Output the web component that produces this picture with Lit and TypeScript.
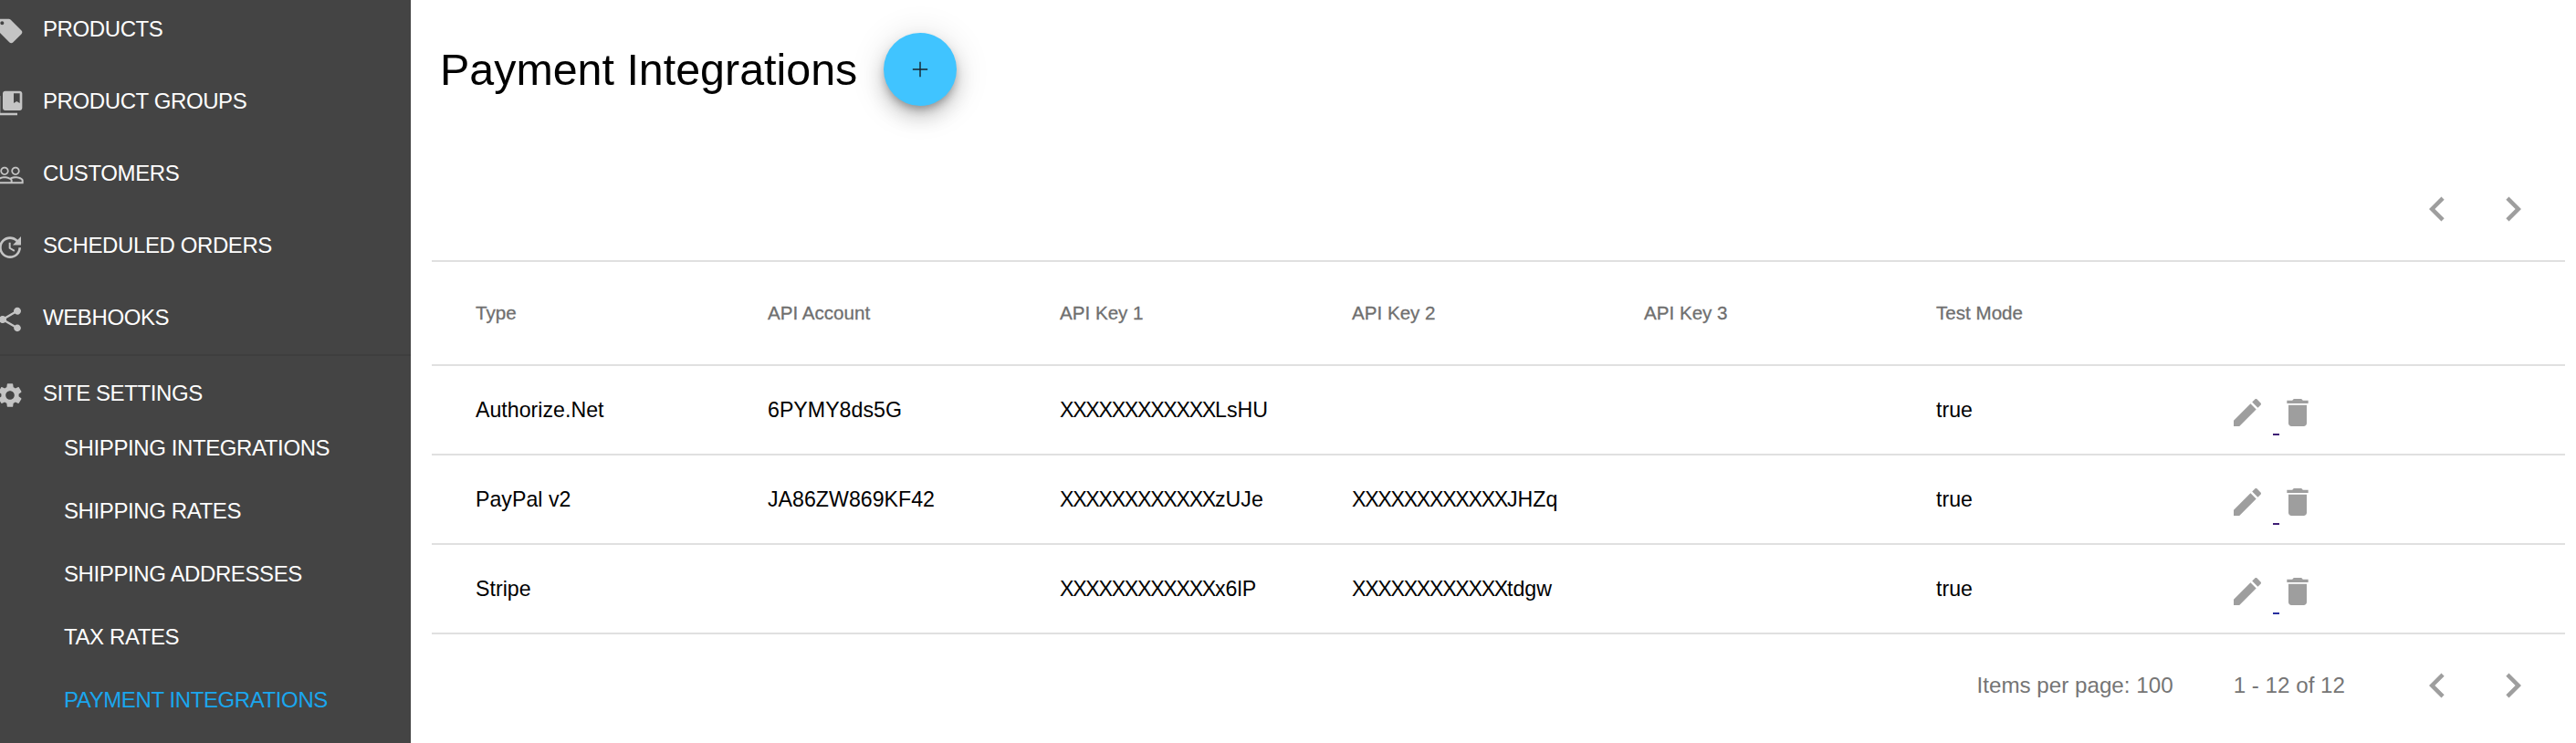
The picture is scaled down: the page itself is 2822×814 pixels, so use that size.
import { LitElement, html, css, svg } from "lit";
import { customElement } from "lit/decorators.js";

const P: Record<string, string> = {
  tag: "M21.41 11.58l-9-9C12.05 2.22 11.55 2 11 2H4c-1.1 0-2 .9-2 2v7c0 .55.22 1.05.59 1.42l9 9c.36.36.86.58 1.41.58.55 0 1.05-.22 1.41-.59l7-7c.37-.36.59-.86.59-1.41 0-.55-.23-1.06-.59-1.42zM5.5 7C4.67 7 4 6.33 4 5.5S4.67 4 5.5 4 7 4.67 7 5.5 6.33 7 5.5 7z",
  groups: "M4 6H2v14c0 1.1.9 2 2 2h14v-2H4V6zm16-4H8c-1.1 0-2 .9-2 2v12c0 1.1.9 2 2 2h12c1.1 0 2-.9 2-2V4c0-1.1-.9-2-2-2zm0 10l-2.5-1.5L15 12V4h5v8z",
  people: "M16.5 13c-1.2 0-3.07.34-4.5 1-1.43-.67-3.3-1-4.5-1C5.33 13 1 14.08 1 16.25V19h22v-2.75c0-2.17-4.33-3.25-6.5-3.25zm-4 4.5h-10v-1.25c0-.54 2.56-1.75 5-1.75s5 1.21 5 1.75v1.25zm9 0H14v-1.25c0-.46-.2-.86-.52-1.22.88-.3 1.96-.53 3.02-.53 2.44 0 5 1.21 5 1.75v1.25zM7.5 12c1.93 0 3.5-1.57 3.5-3.5S9.43 5 7.5 5 4 6.57 4 8.5 5.57 12 7.5 12zm0-5.7c1.21 0 2.2.99 2.2 2.2s-.99 2.2-2.2 2.2-2.2-.99-2.2-2.2.99-2.2 2.2-2.2zm9 5.7c1.93 0 3.5-1.57 3.5-3.5S18.43 5 16.5 5 13 6.57 13 8.5s1.57 3.5 3.5 3.5zm0-5.7c1.21 0 2.2.99 2.2 2.2s-.99 2.2-2.2 2.2-2.2-.99-2.2-2.2.99-2.2 2.2-2.2z",
  update: "M21 10.12h-6.78l2.74-2.82c-2.73-2.7-7.15-2.8-9.88-.1-2.73 2.71-2.73 7.08 0 9.79s7.15 2.71 9.88 0C18.32 15.65 19 14.08 19 12.1h2c0 1.98-.88 4.55-2.64 6.29-3.51 3.48-9.21 3.48-12.72 0-3.5-3.47-3.53-9.11-.02-12.58s9.14-3.47 12.65 0L21 3v7.12zM12.5 8v4.25l3.5 2.08-.72 1.21L11 13V8h1.5z",
  share: "M18 16.08c-.76 0-1.44.3-1.96.77L8.91 12.7c.05-.23.09-.46.09-.7s-.04-.47-.09-.7l7.05-4.11c.54.5 1.25.81 2.04.81 1.66 0 3-1.34 3-3s-1.34-3-3-3-3 1.34-3 3c0 .24.04.47.09.7L8.04 9.81C7.5 9.31 6.79 9 6 9c-1.66 0-3 1.34-3 3s1.34 3 3 3c.79 0 1.5-.31 2.04-.81l7.12 4.16c-.05.21-.08.43-.08.65 0 1.61 1.31 2.92 2.92 2.92 1.61 0 2.92-1.31 2.92-2.92s-1.31-2.92-2.92-2.92z",
  gear: "M19.14 12.94c.04-.3.06-.61.06-.94 0-.32-.02-.64-.07-.94l2.03-1.58c.18-.14.23-.41.12-.61l-1.92-3.32c-.12-.22-.37-.29-.59-.22l-2.39.96c-.5-.38-1.03-.7-1.62-.94l-.36-2.54c-.04-.24-.24-.41-.48-.41h-3.84c-.24 0-.43.17-.47.41l-.36 2.54c-.59.24-1.13.57-1.62.94l-2.39-.96c-.22-.08-.47 0-.59.22L2.74 8.87c-.12.21-.08.47.12.61l2.03 1.58c-.05.3-.09.63-.09.94s.02.64.07.94l-2.03 1.58c-.18.14-.23.41-.12.61l1.92 3.32c.12.22.37.29.59.22l2.39-.96c.5.38 1.03.7 1.62.94l.36 2.54c.05.24.24.41.48.41h3.84c.24 0 .44-.17.47-.41l.36-2.54c.59-.24 1.13-.56 1.62-.94l2.39.96c.22.08.47 0 .59-.22l1.92-3.32c.12-.22.07-.47-.12-.61l-2.01-1.58zM12 15.6c-1.98 0-3.6-1.62-3.6-3.6s1.62-3.6 3.6-3.6 3.6 1.62 3.6 3.6-1.62 3.6-3.6 3.6z",
  edit: "M3 17.25V21h3.75L17.81 9.94l-3.75-3.75L3 17.25zM20.71 7.04c.39-.39.39-1.02 0-1.41l-2.34-2.34c-.39-.39-1.02-.39-1.41 0l-1.83 1.83 3.75 3.75 1.83-1.83z",
  del: "M6 19c0 1.1.9 2 2 2h8c1.1 0 2-.9 2-2V7H6v12zM19 4h-3.5l-1-1h-5l-1 1H5v2h14V4z",
  prev: "M15.41 7.41L14 6l-6 6 6 6 1.41-1.41L10.83 12z",
  next: "M10 6L8.59 7.41 13.17 12l-4.58 4.59L10 18l6-6z",
  plus: "M19 12.6h-6.4V19h-1.2v-6.4H5v-1.2h6.4V5h1.2v6.4H19z",
};

const icon = (name: string, cls: string) =>
  html`<svg class=${cls} viewBox="0 0 24 24" aria-hidden="true">${svg`<path d=${P[name]}></path>`}</svg>`;

const topNav = [
  ["tag", "PRODUCTS"],
  ["groups", "PRODUCT GROUPS"],
  ["people", "CUSTOMERS"],
  ["update", "SCHEDULED ORDERS"],
  ["share", "WEBHOOKS"],
];
const subNav = ["SHIPPING INTEGRATIONS", "SHIPPING RATES", "SHIPPING ADDRESSES", "TAX RATES", "PAYMENT INTEGRATIONS"];
const heads = ["Type", "API Account", "API Key 1", "API Key 2", "API Key 3", "Test Mode", ""];
const rows = [
  { cells: ["Authorize.Net", "6PYMY8ds5G", "XXXXXXXXXXXXLsHU", "", "", "true"], dash: "#3f1f75" },
  { cells: ["PayPal v2", "JA86ZW869KF42", "XXXXXXXXXXXXzUJe", "XXXXXXXXXXXXJHZq", "", "true"], dash: "#3f1f75" },
  { cells: ["Stripe", "", "XXXXXXXXXXXXx6lP", "XXXXXXXXXXXXtdgw", "", "true"], dash: "#28309f" },
];

// The masked prefix of a key is set tighter than the rest of the cell.
const cell = (text: string) => {
  const mask = /^X{12}/.test(text);
  return mask
    ? html`<div><span class="mask">${text.slice(0, 12)}</span>${text.slice(12)}</div>`
    : html`<div>${text}</div>`;
};

@customElement("app-root")
export class AppRoot extends LitElement {
  static styles = css`
    :host {
      display: flex;
      width: 2822px;
      height: 814px;
      overflow: hidden;
      font-family: "Liberation Sans", Arial, sans-serif;
      background: #fff;
      color: #000;
    }
    .side {
      flex: 0 0 450px;
      height: 814px;
      background: #444444;
      overflow: hidden;
      color: #fff;
      font-size: 24px;
      letter-spacing: -0.4px;
    }
    .top {
      margin-top: -8px;
      border-bottom: 2px solid #3e3e3e;
      padding-bottom: 1px;
    }
    .item {
      height: 79px;
      display: flex;
      align-items: center;
      gap: 20px;
      margin-left: -5px;
    }
    .settings {
      height: 82px;
    }
    .nico {
      width: 32px;
      height: 32px;
      flex: none;
      fill: #c4c4c4;
      position: relative;
      top: 2px;
    }
    .sub {
      height: 69px;
      display: flex;
      align-items: center;
      padding-left: 70px;
    }
    .sub.active {
      color: #1aa6ee;
    }
    .subs {
      margin-top: -16px;
    }
    .main {
      flex: 1;
      min-width: 0;
      padding-right: 12px;
    }
    .title {
      height: 173px;
      box-sizing: border-box;
      padding: 36px 0 0 32px;
      display: flex;
      align-items: flex-start;
      gap: 29px;
    }
    h1 {
      margin: 0;
      font-size: 48.4px;
      font-weight: 400;
      line-height: 80px;
      white-space: nowrap;
    }
    .fab {
      width: 80px;
      height: 80px;
      border-radius: 50%;
      background: #40c4ff;
      border: 0;
      padding: 0;
      display: flex;
      align-items: center;
      justify-content: center;
      box-shadow: 0 6px 10px -2px rgba(0, 0, 0, 0.3), 0 12px 20px 2px rgba(0, 0, 0, 0.14), 0 4px 36px 4px rgba(0, 0, 0, 0.1);
    }
    .fab svg {
      width: 28px;
      height: 28px;
      fill: #14222c;
    }
    .table {
      margin-left: 23px;
    }
    .pager {
      height: 112px;
      display: flex;
      align-items: center;
      justify-content: flex-end;
      padding-right: 17px;
      font-size: 24.2px;
      color: #757575;
    }
    .pbtn {
      width: 80px;
      height: 80px;
      display: flex;
      align-items: center;
      justify-content: center;
      margin-left: 3px;
    }
    .pbtn svg {
      width: 54px;
      height: 54px;
      flex: none;
      fill: #9e9e9e;
    }
    .per {
      margin-right: 66px;
    }
    .range {
      margin-right: 58px;
    }
    .row {
      display: grid;
      grid-template-columns: repeat(6, 320px) 1fr;
      padding-left: 48px;
      align-items: center;
      border-top: 2px solid #e0e0e0;
      height: 96px;
      font-size: 23.2px;
      white-space: nowrap;
    }
    .row.head {
      height: 112px;
      font-size: 20.6px;
      color: #6f6f6f;
      -webkit-text-stroke: 0.3px #6f6f6f;
    }
    .mask {
      letter-spacing: -1.3px;
    }
    .end {
      border-top: 2px solid #e0e0e0;
    }
    .acts {
      display: flex;
      align-items: flex-start;
      height: 40px;
      position: relative;
      top: 3px;
      padding-left: 1px;
    }
    .acts svg {
      width: 40px;
      height: 40px;
      flex: none;
      fill: #9e9e9e;
    }
    .dash {
      width: 7px;
      height: 2px;
      margin: 43px 0 0 8px;
      flex: none;
    }
  `;

  render() {
    return html`
      <aside class="side">
        <div class="top">
          ${topNav.map(([i, t]) => html`<div class="item">${icon(i, "nico")}<span>${t}</span></div>`)}
        </div>
        <div class="item settings">${icon("gear", "nico")}<span>SITE SETTINGS</span></div>
        <div class="subs">
          ${subNav.map(
            (t) => html`<div class="sub ${t === "PAYMENT INTEGRATIONS" ? "active" : ""}">${t}</div>`
          )}
        </div>
      </aside>
      <main class="main">
        <div class="title">
          <h1>Payment Integrations</h1>
          <button class="fab" aria-label="Add">${icon("plus", "")}</button>
        </div>
        <div class="table">
          <div class="pager">
            <div class="pbtn">${icon("prev", "")}</div>
            <div class="pbtn">${icon("next", "")}</div>
          </div>
          <div class="row head">${heads.map((h) => html`<div>${h}</div>`)}</div>
          ${rows.map(
            (r) => html`<div class="row">
              ${r.cells.map((c) => cell(c))}
              <div class="acts">
                ${icon("edit", "")}
                <span class="dash" style="background:${r.dash}"></span>
                ${icon("del", "")}
              </div>
            </div>`
          )}
          <div class="pager end">
            <span class="per">Items per page: 100</span>
            <span class="range">1 - 12 of 12</span>
            <div class="pbtn">${icon("prev", "")}</div>
            <div class="pbtn">${icon("next", "")}</div>
          </div>
        </div>
      </main>
    `;
  }
}
